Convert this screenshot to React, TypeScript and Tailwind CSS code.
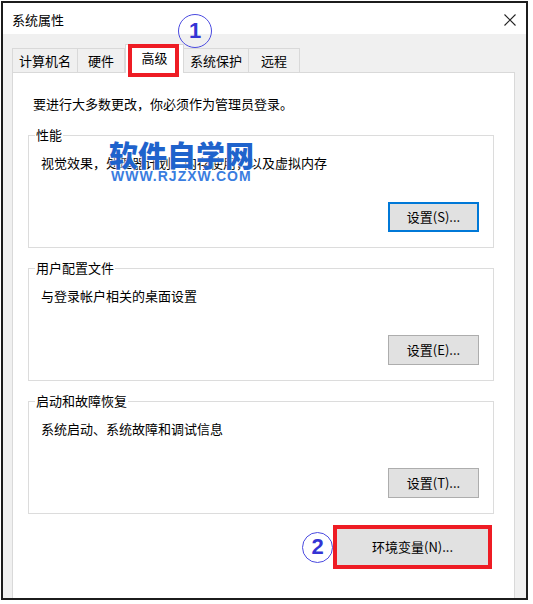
import React from 'react'

const font = "font-['Microsoft_YaHei','Noto_Sans_CJK_SC',sans-serif]"

function Tab({ label, width, selected }: { label: string; width: string; selected?: boolean }) {
  if (selected) {
    return (
      <div className={`relative z-10 -mb-[1px] h-[29px] ${width} bg-white border border-b-0 border-[#d9d9d9] flex items-center justify-center pb-[2px]`}>
        <span>{label}</span>
        {/* annotation box */}
        <div className="absolute left-[2px] top-[-1px] w-[51px] h-[33px] border-[4px] border-[#ee1c24]" />
      </div>
    )
  }
  return (
    <div className={`h-[24px] ${width} bg-[#f0f0f0] border border-b-0 border-l-0 first:border-l border-[#d9d9d9] flex items-center justify-center pt-[1px]`}>
      {label}
    </div>
  )
}

function SettingsButton({ label, focused }: { label: string; focused?: boolean }) {
  return (
    <button
      className={`w-[91px] h-[30px] bg-[#e1e1e1] ${focused ? 'border-2 border-[#0078d7]' : 'border border-[#adadad]'} text-black flex items-center justify-center`}
    >
      {label}
    </button>
  )
}

function GroupBox({ title, text, button, focused, children }: {
  title: string
  text: string
  button: string
  focused?: boolean
  children?: React.ReactNode
}) {
  return (
    <div className="relative ml-[15px] w-[466px] h-[113px] border border-[#dcdcdc] flex flex-col">
      <span className="absolute left-[6px] top-[-9px] bg-white px-[1px] leading-[16px]">{title}</span>
      <div className="pl-[12px] pt-[19px] leading-[16px]">{text}</div>
      <div className="self-end mr-[14px] mt-[31px]">
        <SettingsButton label={button} focused={focused} />
      </div>
      {children}
    </div>
  )
}

function Circled({ n, size }: { n: string; size: string }) {
  return (
    <div className={`${size} rounded-full border-[1.5px] border-[#4a4ae0] flex items-center justify-center text-[#3434d4] font-['Liberation_Sans',sans-serif] font-bold text-[22px] leading-none`}>
      {n}
    </div>
  )
}

export default function App() {
  return (
    <div className={`relative w-[533px] h-[604px] bg-white pt-[1px] pl-[1px] text-[13px] text-black ${font}`}>
      <div className="w-[527px] h-[599px] border-2 border-[#1c1c1c] bg-[#f0f0f0] flex flex-col">
        {/* Title bar */}
        <div className="h-[31px] bg-white flex items-center justify-between pl-[9px] pr-[9px] pt-[2px]">
          <span className="leading-[16px]">系统属性</span>
          <svg width="12" height="12" viewBox="0 0 12 12" className="mr-[1px]">
            <path d="M0.5 0.5 L11.5 11.5 M11.5 0.5 L0.5 11.5" stroke="#222" strokeWidth="1.1" fill="none" />
          </svg>
        </div>

        {/* Body */}
        <div className="flex-1 flex flex-col pl-[9px] pr-[11px] pt-[10px]">
          <div className="flex items-end h-[28px]">
            <Tab label="计算机名" width="w-[66px]" />
            <Tab label="硬件" width="w-[47px]" />
            <Tab label="高级" width="w-[59px]" selected />
            <Tab label="系统保护" width="w-[65px]" />
            <Tab label="远程" width="w-[51px]" />
          </div>

          <div className="flex-1 bg-white border border-b-0 border-[#d9d9d9] flex flex-col pt-[23px]">
            <div className="ml-[20px] leading-[16px]">要进行大多数更改，你必须作为管理员登录。</div>

            <div className="mt-[23px]">
              <GroupBox title="性能" text="视觉效果，处理器计划，内存使用，以及虚拟内存" button="设置(S)..." focused>
                {/* watermark */}
                <div className="absolute left-[80px] top-[1px] flex flex-col items-start">
                  <span className="text-[29px] leading-[34px] font-black text-[#1f63cc] [text-shadow:0_0_2px_#fff,0_0_2px_#fff]">软件自学网</span>
                  <span className="-mt-[1px] ml-[2px] font-['Liberation_Sans',sans-serif] text-[14px] leading-[12px] font-bold tracking-[1px] text-[#3a7de0]">WWW.RJZXW.COM</span>
                </div>
              </GroupBox>
            </div>
            <div className="mt-[20px]">
              <GroupBox title="用户配置文件" text="与登录帐户相关的桌面设置" button="设置(E)..." />
            </div>
            <div className="mt-[20px]">
              <GroupBox title="启动和故障恢复" text="系统启动、系统故障和调试信息" button="设置(T)..." />
            </div>

            <div className="flex justify-end items-center mt-[11px] mr-[22px]">
              <Circled n="2" size="w-[31px] h-[31px]" />
              <div className="w-[159px] h-[44px] border-[4px] border-[#ee1c24]">
                <button className="w-full h-full bg-[#e1e1e1] text-black flex items-center justify-center">环境变量(N)...</button>
              </div>
            </div>
          </div>
        </div>
      </div>

      {/* annotation ① */}
      <div className="absolute left-[178px] top-[14px]">
        <Circled n="1" size="w-[34px] h-[34px]" />
      </div>
    </div>
  )
}
